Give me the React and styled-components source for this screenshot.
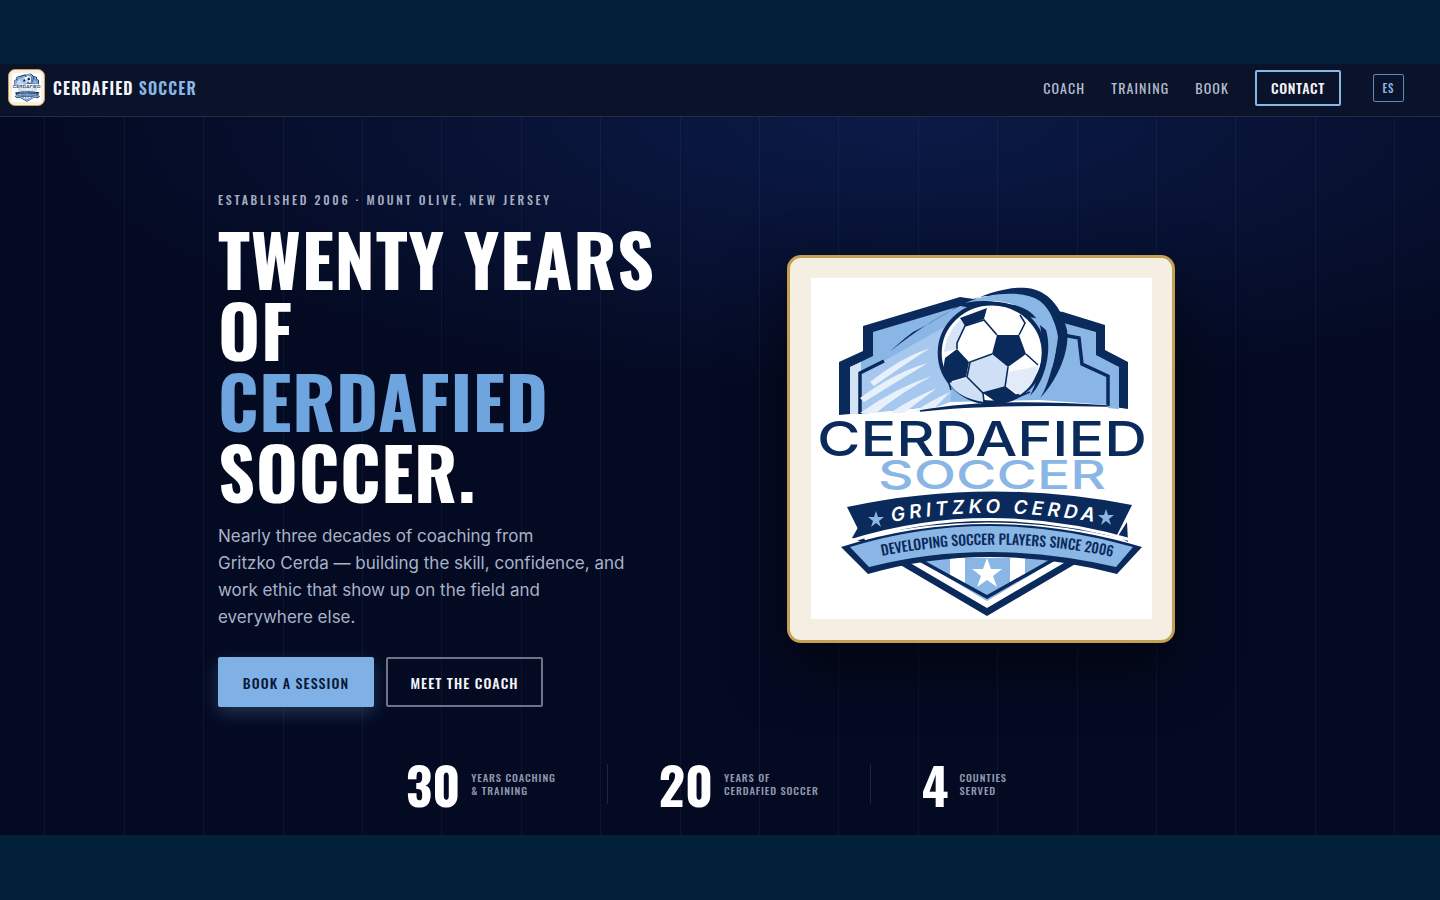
import React from 'react';
import styled, { createGlobalStyle } from 'styled-components';

const NAVY = '#0b2a5c';
const SKY = '#8ab6e6';
const DISPLAY = 'Oswald, "Roboto Condensed", sans-serif';

const GlobalStyle = createGlobalStyle`
    * { box-sizing: border-box; }
    html, body { margin: 0; background: #03203a; }
    body { font-family: Inter, sans-serif; }
`;

const BadgeLogo = ({ className }) => (
    <svg className={className} viewBox="811 278 341 341" xmlns="http://www.w3.org/2000/svg">
        <rect x="811" y="278" width="341" height="341" fill="#fff" />
        {/* crest */}
        <polygon fill={NAVY} points="839,415 839,362 863,351 863,326 960,297 1063,312 1105,325 1105,350 1128,362 1128,409 1100,405 950,405" />
        <polygon fill={SKY} points="850,414 850,367 873,356 873,332 960,306 1060,322 1096,332 1096,355 1119,367 1119,409 1060,404 950,405" />
        <polygon fill="#d3e3f6" points="850,414 850,367 861,362 861,414" />
        <polygon fill="#a6c8ee" points="861,414 861,373 884,361 960,318 950,405" />
        <path d="M1063,335 L1079,338 L1082,364 L1108,376 V406" fill="none" stroke={NAVY} strokeWidth="3.5" />
        <path d="M860,414 V373 L884,361" fill="none" stroke={NAVY} strokeWidth="3.5" />
        {/* speed streaks */}
        <path d="M870,382 Q900,358 930,348 Q902,366 874,386 Z" fill="#e8f1fb" />
        <path d="M860,398 Q895,372 928,363 Q896,382 864,402 Z" fill="#e8f1fb" />
        <path d="M860,413 Q895,388 932,376 Q902,392 876,413 Z" fill="#e8f1fb" />
        <path d="M890,413 Q912,398 937,388 Q918,402 904,413 Z" fill="#e8f1fb" />
        <path d="M914,412 Q930,401 950,392 Q940,403 930,412 Z" fill="#e8f1fb" />
        {/* swoosh */}
        <path d="M880,360 C905,338 935,318 960,306 C985,293 1010,286 1027,288 C1048,290 1062,308 1067,330 C1070,350 1058,380 1040,398 C1048,388 1056,355 1058,337 C1056,322 1050,314 1043,308 C1035,302 1028,298 1020,297 C1005,295 992,295 980,297 C968,300 957,306 947,313 C935,320 925,326 913,332 C902,340 892,350 880,360 Z" fill={NAVY} />
        <path d="M965,303 C990,292 1025,290 1040,301 C1056,314 1061,338 1052,368 C1050,345 1046,325 1030,312 C1015,302 990,298 965,303 Z" fill={SKY} />
        <polygon fill="#fff" points="915,416 950,402 1040,400 1108,405 1108,414 915,416" />
        <path d="M920,411 Q990,398 1108,406 Q990,403 920,411 Z" fill={NAVY} stroke={NAVY} strokeWidth="1.5" />
        {/* ball */}
        <ellipse cx="991.7" cy="353" rx="52" ry="49.5" fill="#fff" stroke={NAVY} strokeWidth="4" />
        <path d="M1046,330 C1052,350 1046,380 1030,396 C1042,372 1045,350 1040,325 Z" fill={NAVY} />
        <polygon fill="#cfe0f6" points="970,362 992,354 1008,367 1005,387 983,393 967,377" />
        <path d="M1008,372 L1038,366 C1036,380 1030,388 1020,395 L1006,386 Z" fill="#e2ecf9" />
        <path d="M949,383 L966,378 L983,394 L984,402 C968,400 955,393 949,383 Z" fill="#cfe0f6" />
        <path d="M944,352 C946,338 952,328 960,320 L965,326 L957,343 L957,349 Z" fill="#d5e4f6" />
        <g stroke={NAVY} strokeWidth="1.6" fill="none">
            <path d="M997,335 L984,320 L965,326 L957,343 L957,349" />
            <path d="M1019,335 L1025,323 L1020,315" />
            <path d="M1026,354 L1038,365" />
            <path d="M1008,367 L1005,387 L983,393 L967,377 L970,362 L992,354" />
            <path d="M1005,387 L1018,397 L1030,392" />
            <path d="M983,393 L984,402" />
            <path d="M949,383 L951,390" />
        </g>
        <polygon fill={NAVY} points="997,335 1019,335 1026,354 1008,367 992,354" />
        <polygon fill={NAVY} points="945,358 957,349 969,362 966,377 949,382 943,370" />
        <polygon fill={NAVY} points="960,318 987,308 984,319 965,326" />
        <polygon fill={NAVY} points="983,393 1005,387 1018,397 996,402" />
        {/* wordmark */}
        <text x="817" y="456" fill={NAVY} fontFamily="Inter, sans-serif" fontWeight="500" fontSize="48" textLength="330" lengthAdjust="spacingAndGlyphs">CERDAFIED</text>
        <text x="878" y="489" fill={SKY} fontFamily="Inter, sans-serif" fontWeight="500" fontSize="40" textLength="228" lengthAdjust="spacingAndGlyphs">SOCCER</text>
        {/* lower shield */}
        <polygon fill={NAVY} points="897,563 987,616 1077,563" />
        <polygon fill="#fff" points="905,560 987,608 1069,560" />
        <polygon fill={SKY} points="915,558 987,601 1059,558" />
        <polygon fill="#fff" points="950,550 965,550 965,586 950,578" />
        <polygon fill="#fff" points="1010,550 1025,550 1025,578 1010,586" />
        <path d="M916,558 L987,597 L1058,557" fill="none" stroke={NAVY} strokeWidth="3.5" />
        <polygon fill="#fff" points="987,558 991,569 1002,569 993,576 997,587 987,580 977,587 981,576 972,569 983,569" />
        {/* name banner */}
        <polygon fill={NAVY} points="852,538 860,524 866,544" />
        <polygon fill={NAVY} points="1118,536 1127,522 1128,542" />
        <path d="M847,507 Q987,477 1132,505 L1116,537 Q987,508 862,537 Z" fill={NAVY} />
        <polygon fill={SKY} points="876,511 878,517 884,517 879,521 881,527 876,523 871,527 873,521 868,517 874,517" />
        <polygon fill={SKY} points="1106,509 1108,515 1114,515 1109,519 1111,525 1106,521 1101,525 1103,519 1098,515 1104,515" />
        <path id="gritzko-arc" d="M892,522 Q987,504 1095,522" fill="none" />
        <text fill="#fff" fontFamily="Inter, sans-serif" fontWeight="600" fontStyle="italic" fontSize="19">
            <textPath href="#gritzko-arc" textLength="203" lengthAdjust="spacing">GRITZKO CERDA</textPath>
        </text>
        {/* motto ribbon */}
        <path d="M841,547 Q987,501 1142,547 L1117,574 Q987,540 868,574 Z" fill={NAVY} />
        <path d="M850,541 Q987,498 1135,541" fill="none" stroke="#fff" strokeWidth="3" />
        <path d="M850,547 Q987,505 1133,547 L1116,567 Q987,537 869,567 Z" fill={SKY} />
        <path id="motto-arc" d="M882,556 Q997,533 1113,557" fill="none" />
        <text fill={NAVY} fontFamily="Oswald, sans-serif" fontWeight="500" fontSize="14">
            <textPath href="#motto-arc" textLength="232" lengthAdjust="spacing">DEVELOPING SOCCER PLAYERS SINCE 2006</textPath>
        </text>
    </svg>
);

const stats = [
    { value: '30', lines: ['Years coaching', '& training'] },
    { value: '20', lines: ['Years of', 'Cerdafied soccer'] },
    { value: '4', lines: ['Counties', 'served'] },
];

const App = () => {
    return (
        <>
            <GlobalStyle />
            <Page>
                <Nav>
                    <Brand>
                        <BrandMark><BrandLogo /></BrandMark>
                        <BrandName>Cerdafied <span>Soccer</span></BrandName>
                    </Brand>
                    <NavLinks>
                        <NavLink>Coach</NavLink>
                        <NavLink>Training</NavLink>
                        <NavLink>Book</NavLink>
                        <ContactLink>Contact</ContactLink>
                        <LangButton>ES</LangButton>
                    </NavLinks>
                </Nav>
                <Hero>
                    <HeroGrid>
                        <HeroCopy>
                            <Eyebrow>Established 2006 · Mount Olive, New Jersey</Eyebrow>
                            <Title>
                                Twenty Years<br />
                                of<br />
                                <span>Cerdafied</span><br />
                                Soccer.
                            </Title>
                            <Lead>
                                Nearly three decades of coaching from<br />
                                Gritzko Cerda — building the skill, confidence, and<br />
                                work ethic that show up on the field and<br />
                                everywhere else.
                            </Lead>
                            <Actions>
                                <Button $primary>Book a session</Button>
                                <Button>Meet the coach</Button>
                            </Actions>
                        </HeroCopy>
                        <Card>
                            <CardLogo />
                        </Card>
                    </HeroGrid>
                    <Stats>
                        {stats.map((s) => (
                            <Stat key={s.value}>
                                <StatValue>{s.value}</StatValue>
                                <StatLabel>{s.lines[0]}<br />{s.lines[1]}</StatLabel>
                            </Stat>
                        ))}
                    </Stats>
                </Hero>
            </Page>
        </>
    );
};

const Page = styled.div`
    height: 900px;
    padding: 64px 0 65px;
    background: #03203a;
    display: flex;
    flex-direction: column;
`;

const Nav = styled.header`
    height: 53px;
    flex: none;
    padding: 0 36px 5px 8px;
    display: flex;
    align-items: center;
    justify-content: space-between;
    background: #0a1329;
    border-bottom: 1px solid #232c45;
`;

const Brand = styled.div`
    display: flex;
    align-items: center;
    gap: 8px;
`;

const BrandMark = styled.div`
    width: 37px;
    height: 37px;
    padding: 3px;
    border-radius: 7px;
    background: #f5f0e3;
    border: 1px solid #c4a052;
    overflow: hidden;
`;

const BrandLogo = styled(BadgeLogo)`
    display: block;
    width: 100%;
    height: 100%;
`;

const BrandName = styled.div`
    font-family: ${DISPLAY};
    font-weight: 600;
    font-size: 16px;
    letter-spacing: 1.14px;
    text-transform: uppercase;
    color: #f4f6fb;

    span {
        color: ${SKY};
    }
`;

const NavLinks = styled.nav`
    display: flex;
    align-items: center;
    gap: 26px;
`;

const NavLink = styled.a`
    font-family: ${DISPLAY};
    font-weight: 400;
    font-size: 14px;
    letter-spacing: 1.1px;
    text-transform: uppercase;
    color: #b4bed2;
`;

const ContactLink = styled(NavLink)`
    width: 86px;
    height: 36px;
    display: flex;
    align-items: center;
    justify-content: center;
    border: 2px solid ${SKY};
    border-radius: 2px;
    font-weight: 500;
    letter-spacing: 0.7px;
    color: #f4f6fb;
`;

const LangButton = styled.button`
    width: 31px;
    height: 28px;
    margin-left: 6px;
    padding: 0;
    background: transparent;
    border: 1px solid #5f88bc;
    border-radius: 2px;
    font-family: ${DISPLAY};
    font-weight: 500;
    font-size: 11px;
    letter-spacing: 0.9px;
    color: ${SKY};
`;

const Hero = styled.main`
    flex: 1;
    display: flex;
    flex-direction: column;
    background:
        repeating-linear-gradient(90deg, transparent 0, transparent 78.4px, rgba(120, 140, 190, 0.08) 78.4px, rgba(120, 140, 190, 0.08) 79.4px) -34px 0,
        radial-gradient(ellipse 60% 38% at 62% 0, #0b1a47 0%, rgba(11, 26, 71, 0) 100%),
        #040a22;
`;

const HeroGrid = styled.div`
    padding: 76px 0 0 218px;
    display: grid;
    grid-template-columns: 569px 388px;
    align-items: center;
`;

const HeroCopy = styled.div`
    display: flex;
    flex-direction: column;
    align-items: flex-start;
`;

const Eyebrow = styled.div`
    font-family: ${DISPLAY};
    font-weight: 500;
    font-size: 12px;
    line-height: 14px;
    letter-spacing: 2.66px;
    text-transform: uppercase;
    color: #a3adc2;
`;

const Title = styled.h1`
    margin: 15px 0 0;
    font-family: ${DISPLAY};
    font-weight: 700;
    font-size: 72px;
    line-height: 71px;
    letter-spacing: 0.72px;
    text-transform: uppercase;
    color: #fff;

    span {
        color: #6fa5de;
    }
`;

const Lead = styled.p`
    margin: 17px 0 0;
    font-size: 17px;
    font-weight: 400;
    line-height: 27px;
    color: #a8b3c8;
`;

const Button = styled.button`
    height: 50px;
    width: ${(p) => (p.$primary ? '156px' : '157px')};
    padding: 0;
    border-radius: 2px;
    font-family: ${DISPLAY};
    font-weight: 500;
    font-size: 14px;
    letter-spacing: 1.1px;
    text-transform: uppercase;
    color: ${(p) => (p.$primary ? '#0a1838' : '#f4f6fb')};
    background: ${(p) => (p.$primary ? '#7fb0e6' : 'transparent')};
    border: ${(p) => (p.$primary ? 'none' : '2px solid #6d7488')};
    box-shadow: ${(p) => (p.$primary ? '0 6px 18px rgba(111, 165, 222, 0.28)' : 'none')};
`;

const Actions = styled.div`
    margin-top: 26px;
    display: flex;
    gap: 12px;
`;

const Card = styled.div`
    width: 388px;
    height: 388px;
    margin-top: -3px;
    padding: 20.5px;
    display: flex;
    background: #f4efe2;
    border: 3px solid #c4a052;
    border-radius: 14px;
    box-shadow: 0 24px 60px rgba(0, 0, 0, 0.55);
`;

const CardLogo = styled(BadgeLogo)`
    display: block;
    width: 100%;
    height: 100%;
`;

const Stats = styled.div`
    padding-right: 27px;
    margin-top: 57px;
    display: flex;
    justify-content: center;
`;

const Stat = styled.div`
    display: flex;
    align-items: center;
    gap: 11px;
    padding: 0 51px;
    height: 40px;

    & + & {
        border-left: 1px solid #1f2740;
    }
`;

const StatValue = styled.div`
    font-family: ${DISPLAY};
    font-weight: 700;
    font-size: 51px;
    line-height: 44px;
    color: #fff;
`;

const StatLabel = styled.div`
    font-family: ${DISPLAY};
    font-weight: 500;
    font-size: 10.5px;
    line-height: 13px;
    letter-spacing: 0.9px;
    text-transform: uppercase;
    color: #8f98ae;
`;

export default App;
